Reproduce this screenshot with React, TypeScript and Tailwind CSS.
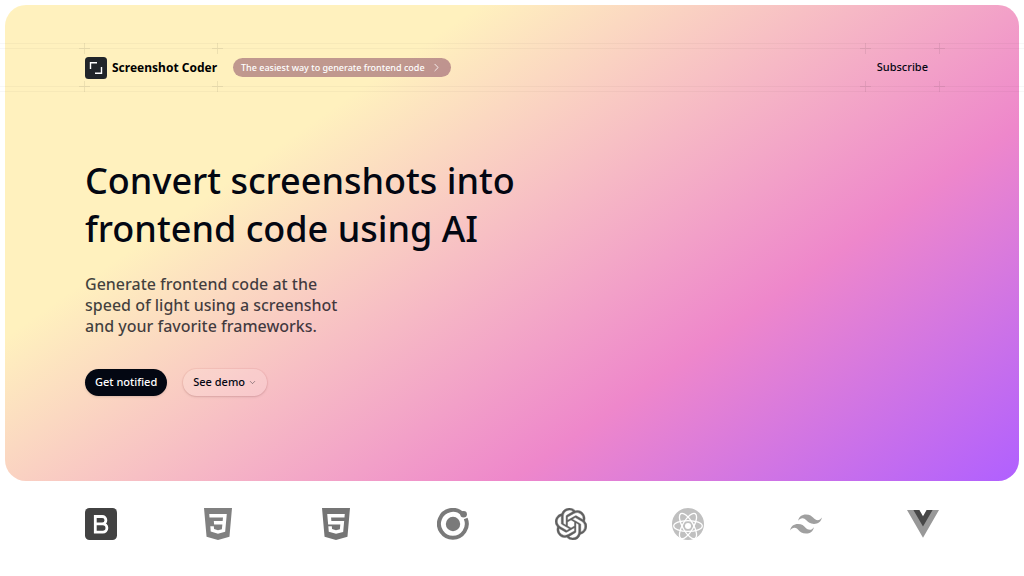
import { ChevronDown, ChevronRight } from 'lucide-react';
import { SiOpenai, SiTailwindcss } from 'react-icons/si';

const container = 'mx-auto w-full max-w-[854px]';

function Plus({ className }: { className: string }) {
  return (
    <svg viewBox="0 0 11 11" aria-hidden="true" className={`absolute size-[11px] fill-black/7 ${className}`}>
      <path d="M5 0h1v5h5v1H6v5H5V6H0V5h5z" />
    </svg>
  );
}

function LogoMark() {
  return (
    <svg viewBox="0 0 22 22" aria-hidden="true" className="size-[22px]">
      <rect width="22" height="22" rx="3.500" fill="#212529" />
      <path d="M5.500 12V5.700H12" fill="none" stroke="#fff" strokeWidth="1.400" />
      <path d="M16.500 10v6.300H10" fill="none" stroke="#fff" strokeWidth="1.400" />
    </svg>
  );
}

function Bootstrap() {
  return (
    <svg viewBox="0 0 32 32" className="size-8">
      <rect width="32" height="32" rx="4.500" fill="#424242" />
      <path
        d="M10.300 8.500h6.900a3.700 3.700 0 0 1 0 7.400h-6.900h7.500a4.100 4.100 0 0 1 0 8.200h-7.500z"
        fill="none"
        stroke="#fff"
        strokeWidth="2.800"
      />
    </svg>
  );
}

function Css3() {
  return (
    <svg viewBox="0 0 24 24" className="size-8 fill-[#808080]">
      <path d="M1.500 0h21l-1.910 21.563L11.977 24l-8.565-2.438L1.500 0zm17.090 4.413L5.410 4.410l.213 2.622 10.125.002-.255 2.716h-6.640l.24 2.573h6.182l-.366 3.523-2.910.804-2.956-.810-.188-2.110h-2.610l.29 3.855L12 19.288l5.373-1.530L18.590 4.414v-.001z" />
    </svg>
  );
}

function Html5() {
  return (
    <svg viewBox="0 0 24 24" className="size-8 fill-[#757575]">
      <path d="M1.500 0h21l-1.910 21.563L11.977 24l-8.564-2.438L1.500 0zm7.031 9.750l-.232-2.718 10.059.003.23-2.622L5.412 4.410l.698 8.010h9.126l-.326 3.426-2.910.804-2.955-.810-.188-2.110H6.248l.33 4.171L12 19.351l5.379-1.443.744-8.157H8.531z" />
    </svg>
  );
}

function Ionic() {
  return (
    <svg viewBox="0 0 32 32" className="size-8">
      <path d="M25.500 5.800A13.900 13.900 0 1 0 28.700 10.500" fill="none" stroke="#7a7a7a" strokeWidth="4" />
      <circle cx="16" cy="16" r="7.200" fill="#7a7a7a" />
      <circle cx="26.600" cy="6.300" r="3.300" fill="#7a7a7a" />
    </svg>
  );
}

function ReactLogo() {
  return (
    <svg viewBox="0 0 32 32" className="size-8">
      <circle cx="16" cy="16" r="16" fill="#c0c0c0" />
      <g fill="none" stroke="#fff" strokeWidth="1.300">
        <ellipse cx="16" cy="18" rx="14.300" ry="5.400" />
        <ellipse cx="16" cy="18" rx="14.300" ry="5.400" transform="rotate(60 16 18)" />
        <ellipse cx="16" cy="18" rx="14.300" ry="5.400" transform="rotate(120 16 18)" />
      </g>
      <circle cx="16" cy="18" r="3" fill="#fff" />
    </svg>
  );
}

function Vue() {
  return (
    <svg viewBox="0 0 32 32" className="size-8">
      <path d="M0 2h12.300L16 8.400 19.700 2H32L16 29.700z" fill="#989898" />
      <path d="M6.400 2h5.900L16 8.400 19.700 2h5.900L16 18.600z" fill="#474747" />
    </svg>
  );
}

const frameworks = [
  { name: 'Bootstrap', icon: <Bootstrap /> },
  { name: 'CSS3', icon: <Css3 /> },
  { name: 'HTML5', icon: <Html5 /> },
  { name: 'Ionic', icon: <Ionic /> },
  { name: 'OpenAI', icon: <SiOpenai className="size-8 stroke-[#606060] stroke-[0.3] text-[#606060]" /> },
  { name: 'React', icon: <ReactLogo /> },
  { name: 'Tailwind CSS', icon: <SiTailwindcss className="size-8 text-[#a0a0a0]" /> },
  { name: 'Vue', icon: <Vue /> },
];

function Header() {
  return (
    <header className="-mx-[5px] border-y border-black/3 py-1">
      <div className="border-y border-black/3">
        <nav className={`${container} flex h-[37px] items-stretch justify-between`}>
          <div className="flex items-center gap-4">
            <div className="relative flex h-full items-center">
              <Plus className="-top-[6px] -left-[6px]" />
              <Plus className="-top-[6px] -right-[6px]" />
              <Plus className="-bottom-[6px] -left-[6px]" />
              <Plus className="-right-[6px] -bottom-[6px]" />
              <a href="#home" className="flex items-center gap-[5px] text-[12px] font-bold whitespace-nowrap text-black">
                <LogoMark />
                Screenshot Coder
              </a>
            </div>
            <a
              href="#start"
              className="flex h-[19px] items-center gap-[5px] rounded-full bg-[#742d54]/45 px-2 text-[9px] font-medium whitespace-nowrap text-white"
            >
              The easiest way to generate frontend code
              <ChevronRight className="size-[13px]" strokeWidth={1.5} />
            </a>
          </div>
          <div className="relative flex items-center">
            <Plus className="-top-[6px] -left-[6px]" />
            <Plus className="-top-[6px] -right-[6px]" />
            <Plus className="-bottom-[6px] -left-[6px]" />
            <Plus className="-right-[6px] -bottom-[6px]" />
            <a href="#subscribe" className="px-[11px] text-[11px] font-medium text-gray-950">
              Subscribe
            </a>
          </div>
        </nav>
      </div>
    </header>
  );
}

export default function App() {
  return (
    <main className="bg-white p-[5px] font-['Noto_Sans',sans-serif]">
      <section className="rounded-[21px] bg-[linear-gradient(145deg,#fff1be_28%,#ee87cb_70%,#b060ff)] pt-[38px]">
        <Header />
        <div className={`${container} pt-[65px] pb-[85px]`}>
          <h1 className="text-[36px] leading-[48px] font-medium text-gray-950">
            Convert screenshots into
            <br />
            frontend code using AI
          </h1>
          <p className="mt-[21px] text-[16px] leading-[21px] font-medium text-gray-950/75">
            Generate frontend code at the
            <br />
            speed of light using a screenshot
            <br />
            and your favorite frameworks.
          </p>
          <div className="mt-8 flex gap-4">
            <button className="h-[27px] rounded-full bg-gray-950 px-[10px] text-[11px] font-medium text-white shadow-sm">
              Get notified
            </button>
            <button className="flex h-[27px] items-center gap-[3px] rounded-full bg-white/15 px-[10px] text-[11px] font-medium text-gray-950 shadow-sm ring-1 ring-[#d15052]/8">
              See demo
              <ChevronDown className="size-[9px] text-gray-950/50" strokeWidth={2} />
            </button>
          </div>
        </div>
      </section>
      <ul className={`${container} flex justify-between py-[27px]`}>
        {frameworks.map(({ name, icon }) => (
          <li key={name} aria-label={name}>
            {icon}
          </li>
        ))}
      </ul>
    </main>
  );
}
